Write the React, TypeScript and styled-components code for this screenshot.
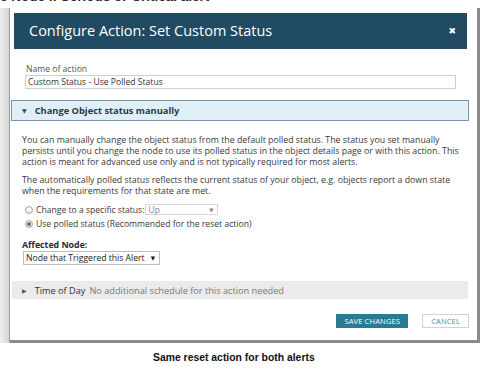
import React from "react";
import styled, { createGlobalStyle } from "styled-components";

const Global = createGlobalStyle`
  html, body { margin: 0; padding: 0; background: #ffffff; }
  body { width: 480px; height: 370px; overflow: hidden; font-family: "Open Sans", "Liberation Sans", sans-serif; }
  * { box-sizing: border-box; }
`;

const Page = styled.div`
  width: 480px;
  height: 370px;
  display: flex;
  flex-direction: column;
  background: #fff;
`;

const TopStrip = styled.div`
  height: 8px;
  overflow: hidden;
  flex: none;
`;

const TopText = styled.div`
  margin-top: -11px;
  font-family: "Liberation Sans", Arial, sans-serif;
  font-weight: bold;
  font-size: 13.5px;
  line-height: 16px;
  color: #2a2a2a;
  white-space: nowrap;
`;

const Stage = styled.div`
  display: flex;
  height: 335px;
  flex: none;
`;

const Backdrop = styled.div`
  width: 10px;
  background: linear-gradient(to right, #eeeeee, #d6d6d6);
  border-right: 1px solid #9d9d9d;
`;

const Modal = styled.div`
  flex: 1;
  background: #fff;
  border-right: 3px solid #8a8a8a;
  border-bottom: 3px solid #8a8a8a;
  display: flex;
  flex-direction: column;
`;

const Header = styled.div`
  margin: 5px 10px 0 4px;
  height: 36px;
  background: #214a63;
  display: flex;
  align-items: center;
  justify-content: space-between;
  padding: 0 11px 0 15px;
`;

const Title = styled.div`
  color: #fff;
  font-size: 14.5px;
  line-height: 18px;
  white-space: nowrap;
`;

const Close = styled.div`
  color: #fff;
  font-family: "DejaVu Sans", sans-serif;
  font-weight: bold;
  font-size: 9px;
`;

const NameField = styled.div`
  margin: 15px 0 0 15px;
  display: flex;
  flex-direction: column;
`;

const Label = styled.div`
  font-size: 8.6px;
  line-height: 11px;
  color: #555;
  padding-left: 1px;
`;

const TextBox = styled.div`
  width: 431px;
  height: 14px;
  border: 1px solid #cfcfcf;
  font-size: 8.6px;
  line-height: 12px;
  padding-left: 2px;
  color: #333;
  white-space: nowrap;
`;

const SectionHeader = styled.div`
  margin: 11px 8px 0 1px;
  height: 21px;
  background: #e0eff6;
  border: 1px solid #7a93a5;
  display: flex;
  align-items: center;
  padding-left: 10px;
  font-weight: bold;
  font-size: 9.3px;
  color: #263a48;
  white-space: nowrap;
`;

const Caret = styled.span<{ $size?: number; $color?: string }>`
  font-family: "DejaVu Sans", sans-serif;
  font-size: ${(p) => p.$size ?? 6}px;
  color: ${(p) => p.$color ?? "#2b4d66"};
  margin-right: 8px;
`;

const SectionBody = styled.div`
  padding: 14px 0 0 12px;
  display: flex;
  flex-direction: column;
`;

const Para = styled.p<{ $gap?: number }>`
  margin: ${(p) => p.$gap ?? 0}px 0 0 0;
  font-size: 8.8px;
  line-height: 11px;
  color: #3a3a3a;
  white-space: nowrap;
`;

const RadioRow = styled.div<{ $gap: number }>`
  margin-top: ${(p) => p.$gap}px;
  display: flex;
  align-items: center;
  height: 13px;
  padding-left: 3px;
  font-size: 8.6px;
  color: #3a3a3a;
  white-space: nowrap;
`;

const Radio = styled.span<{ $checked?: boolean }>`
  width: 8px;
  height: 8px;
  border-radius: 50%;
  border: 1px solid #a9a9a9;
  background: radial-gradient(circle at 50% 40%, #ffffff, #dedede);
  margin-right: 3px;
  display: flex;
  align-items: center;
  justify-content: center;
  &::after {
    content: "";
    width: 4px;
    height: 4px;
    border-radius: 50%;
    background: ${(p) => (p.$checked ? "#6d6d6d" : "transparent")};
  }
`;

const MiniSelect = styled.div<{ $width: number; $height: number; $muted?: boolean }>`
  width: ${(p) => p.$width}px;
  height: ${(p) => p.$height}px;
  border: 1px solid ${(p) => (p.$muted ? "#d6d6d6" : "#bdbdbd")};
  display: flex;
  align-items: center;
  justify-content: space-between;
  padding: 0 4px 0 2px;
  font-size: 8.6px;
  color: ${(p) => (p.$muted ? "#8a8a8a" : "#222")};
  white-space: nowrap;
  margin-left: 1px;
`;

const SelectArrow = styled.span<{ $muted?: boolean }>`
  font-family: "DejaVu Sans", sans-serif;
  font-size: 5.5px;
  color: ${(p) => (p.$muted ? "#888" : "#111")};
`;

const FieldTitle = styled.div`
  margin-top: 10px;
  font-weight: bold;
  font-size: 8.8px;
  line-height: 11px;
  color: #2a2a2a;
`;

const NodeSelectWrap = styled.div`
  margin-top: 0;
`;

const CollapsedSection = styled.div`
  margin: 16px 9px 0 2px;
  height: 18px;
  background: #ebebeb;
  display: flex;
  align-items: center;
  padding-left: 10px;
  font-size: 9.2px;
  white-space: nowrap;
`;

const SectionName = styled.span`
  color: #333;
  margin-right: 4px;
`;

const SectionNote = styled.span`
  color: #7a7a7a;
`;

const Footer = styled.div`
  margin: 15px 8px 0 0;
  display: flex;
  justify-content: flex-end;
  gap: 14px;
`;

const Button = styled.div<{ $primary?: boolean }>`
  height: 14px;
  padding: 0 ${(p) => (p.$primary ? 7 : 8)}px;
  display: flex;
  align-items: center;
  font-size: 7.6px;
  letter-spacing: 0.1px;
  background: ${(p) => (p.$primary ? "#2b7a94" : "#fff")};
  color: ${(p) => (p.$primary ? "#fff" : "#6b8595")};
  border: 1px solid ${(p) => (p.$primary ? "#2b7a94" : "#d2d2d2")};
  white-space: nowrap;
`;

const Caption = styled.div`
  margin: 8px 0 0 153px;
  font-family: "Liberation Sans", Arial, sans-serif;
  font-weight: bold;
  font-size: 10.4px;
  line-height: 13px;
  color: #111;
  white-space: nowrap;
`;

export default function App() {
  return (
    <>
      <Global />
      <Page>
        <TopStrip>
          <TopText>e Node if Serious or Critical alert</TopText>
        </TopStrip>
        <Stage>
          <Backdrop />
          <Modal>
            <Header>
              <Title>Configure Action: Set Custom Status</Title>
              <Close>✖</Close>
            </Header>
            <NameField>
              <Label>Name of action</Label>
              <TextBox>Custom Status - Use Polled Status</TextBox>
            </NameField>
            <SectionHeader>
              <Caret>▼</Caret>
              Change Object status manually
            </SectionHeader>
            <SectionBody>
              <Para>
                You can manually change the object status from the default polled status. The status you set manually
                <br />
                persists until you change the node to use its polled status in the object details page or with this action. This
                <br />
                action is meant for advanced use only and is not typically required for most alerts.
              </Para>
              <Para $gap={7}>
                The automatically polled status reflects the current status of your object, e.g. objects report a down state
                <br />
                when the requirements for that state are met.
              </Para>
              <RadioRow $gap={6}>
                <Radio />
                Change to a specific status:
                <MiniSelect $width={73} $height={11} $muted>
                  Up
                  <SelectArrow $muted>▼</SelectArrow>
                </MiniSelect>
              </RadioRow>
              <RadioRow $gap={1}>
                <Radio $checked />
                Use polled status (Recommended for the reset action)
              </RadioRow>
              <FieldTitle>Affected Node:</FieldTitle>
              <NodeSelectWrap>
                <MiniSelect $width={137} $height={14}>
                  Node that Triggered this Alert
                  <SelectArrow>▼</SelectArrow>
                </MiniSelect>
              </NodeSelectWrap>
            </SectionBody>
            <CollapsedSection>
              <Caret $size={6} $color="#555">▶</Caret>
              <SectionName>Time of Day</SectionName>
              <SectionNote>No additional schedule for this action needed</SectionNote>
            </CollapsedSection>
            <Footer>
              <Button $primary>SAVE CHANGES</Button>
              <Button>CANCEL</Button>
            </Footer>
          </Modal>
        </Stage>
        <Caption>Same reset action for both alerts</Caption>
      </Page>
    </>
  );
}
